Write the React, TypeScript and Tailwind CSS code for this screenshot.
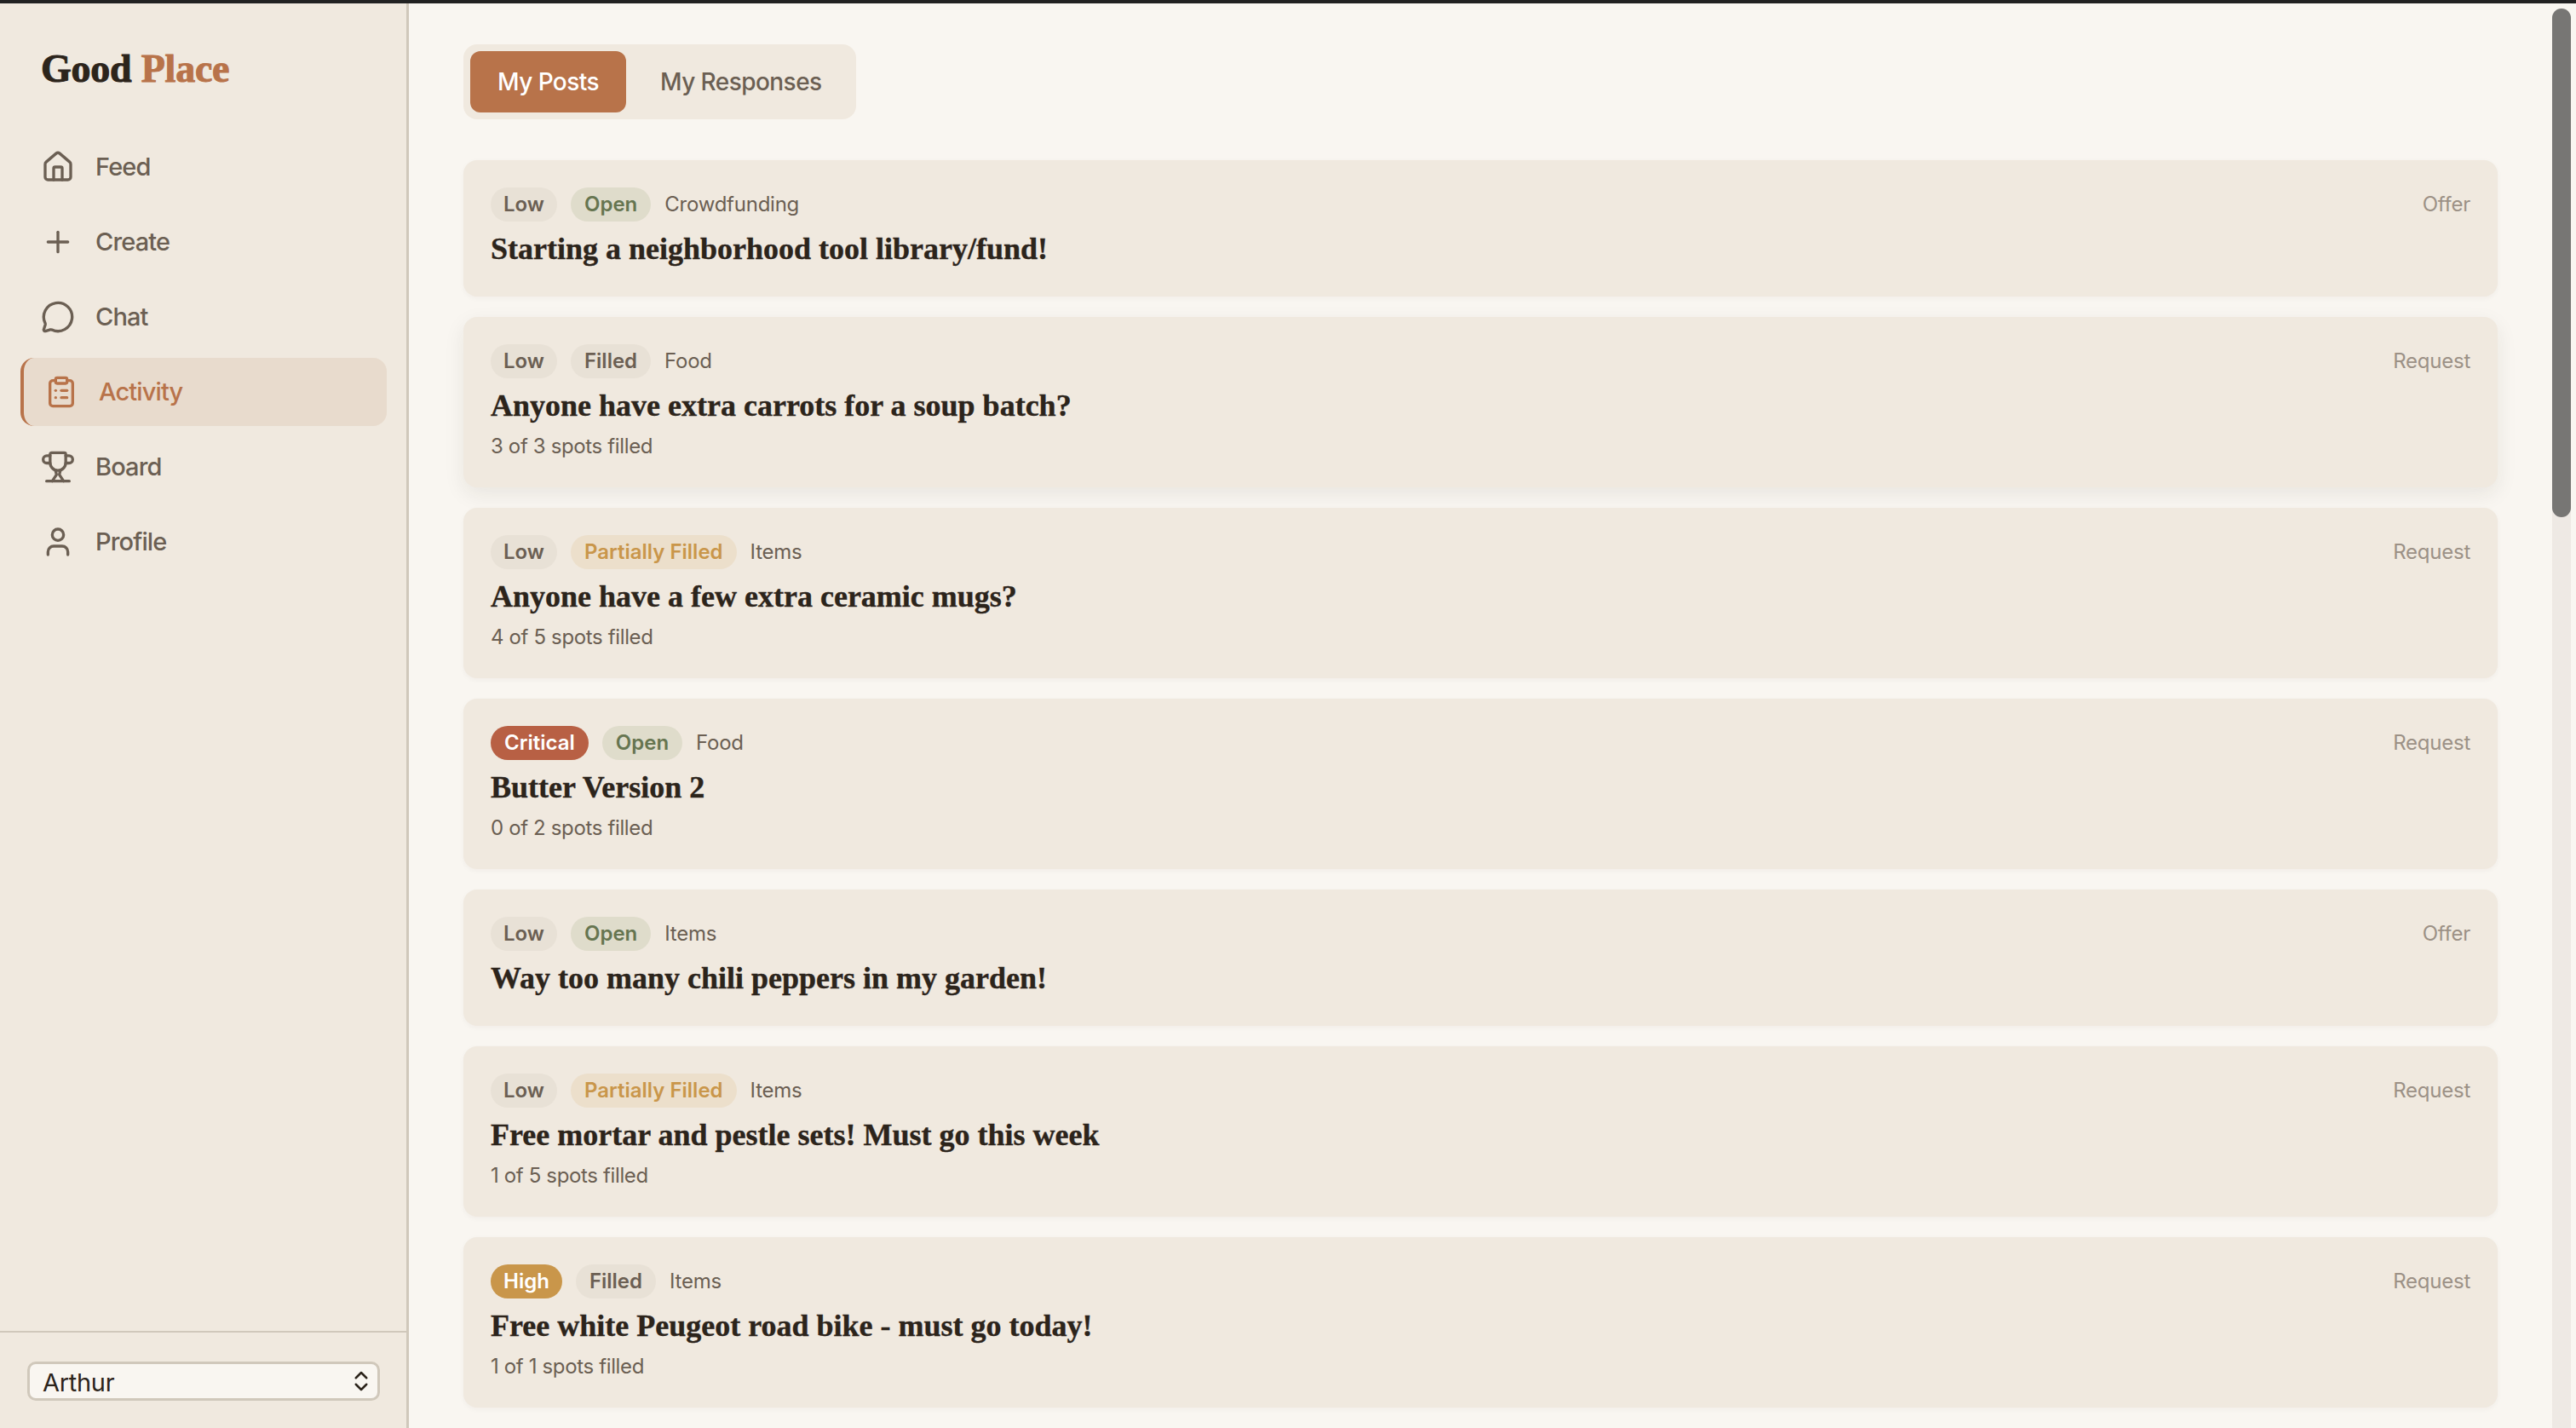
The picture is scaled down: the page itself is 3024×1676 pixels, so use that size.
import { ChevronsUpDown, ClipboardList, House, MessageCircle, Plus, User } from "lucide-react";

const SANS = "font-['Inter','Liberation_Sans',sans-serif]";
const SERIF = "font-['Liberation_Serif','DejaVu_Serif',serif]";

type Post = {
  urgency: "Low" | "High" | "Critical";
  status: "Open" | "Filled" | "Partially Filled";
  category: string;
  title: string;
  spots?: string;
  kind: "Offer" | "Request";
  hovered?: boolean;
};

const posts: Post[] = [
  { urgency: "Low", status: "Open", category: "Crowdfunding", title: "Starting a neighborhood tool library/fund!", kind: "Offer" },
  { urgency: "Low", status: "Filled", category: "Food", title: "Anyone have extra carrots for a soup batch?", spots: "3 of 3 spots filled", kind: "Request", hovered: true },
  { urgency: "Low", status: "Partially Filled", category: "Items", title: "Anyone have a few extra ceramic mugs?", spots: "4 of 5 spots filled", kind: "Request" },
  { urgency: "Critical", status: "Open", category: "Food", title: "Butter Version 2", spots: "0 of 2 spots filled", kind: "Request" },
  { urgency: "Low", status: "Open", category: "Items", title: "Way too many chili peppers in my garden!", kind: "Offer" },
  { urgency: "Low", status: "Partially Filled", category: "Items", title: "Free mortar and pestle sets! Must go this week", spots: "1 of 5 spots filled", kind: "Request" },
  { urgency: "High", status: "Filled", category: "Items", title: "Free white Peugeot road bike - must go today!", spots: "1 of 1 spots filled", kind: "Request" },
];

const urgencyClass = {
  Low: "bg-[#e8e1d6] px-[15px] text-[#6b5f53]",
  High: "bg-[#c9964a] px-[15px] text-white",
  Critical: "bg-[#b86044] px-4 text-white",
};

const statusClass = {
  Open: "bg-[#dfdccb] text-[#667550]",
  Filled: "bg-[#e8e1d6] text-[#6b5f53]",
  "Partially Filled": "bg-[#ecdfcb] text-[#c9964a]",
};

function TrophyIcon({ className, strokeWidth }: { className?: string; strokeWidth?: number }) {
  return (
    <svg viewBox="0 0 24 24" fill="none" stroke="currentColor" strokeWidth={strokeWidth} strokeLinecap="round" strokeLinejoin="round" className={className}>
      <path d="M6.5 9a5.5 5.5 0 0 0 11 0V3a1 1 0 0 0-1-1h-9a1 1 0 0 0-1 1z" />
      <path d="M6.5 9.3H4.2a2.6 2.6 0 0 1 0-5.2h2.3" />
      <path d="M17.5 9.3h2.3a2.6 2.6 0 0 0 0-5.2h-2.3" />
      <path d="M10.3 14.3 11 17.5 8 22" />
      <path d="M13.7 14.3 13 17.5l3 4.5" />
      <path d="M4 22h16" />
    </svg>
  );
}

function NavItem({ icon: Icon, label, active }: { icon: React.ComponentType<{ className?: string; strokeWidth?: number }>; label: string; active?: boolean }) {
  return (
    <a
      href="#"
      className={`flex h-20 items-center gap-6 rounded-2xl px-6 text-[29px] font-medium tracking-[-0.03em] ${
        active ? "border-l-4 border-[#b8734a] bg-[#e8dbcd] text-[#b8734a]" : "text-[#6b5f53]"
      }`}
    >
      <Icon className="size-10" strokeWidth={2} />
      {label}
    </a>
  );
}

function Card({ post }: { post: Post }) {
  return (
    <div className={`flex justify-between rounded-2xl bg-[#f0e9df] p-8 ${post.hovered ? "shadow-[0_8px_24px_rgba(44,36,27,0.08)]" : "shadow-[0_2px_6px_rgba(44,36,27,0.04)]"}`}>
      <div>
        <div className="flex h-10 items-center gap-4 text-2xl tracking-[-0.01em]">
          <span className={`flex h-10 items-center rounded-full font-semibold tracking-normal ${urgencyClass[post.urgency]}`}>{post.urgency}</span>
          <span className={`flex h-10 items-center rounded-full px-4 font-semibold tracking-normal ${statusClass[post.status]}`}>{post.status}</span>
          <span className="text-[#6b5f53]">{post.category}</span>
        </div>
        <h3 className={`mt-[9px] text-4xl leading-[47px] font-bold text-[#2c241b] [-webkit-text-stroke:0.4px_currentColor] ${SERIF}`}>{post.title}</h3>
        {post.spots && <p className="mt-2 text-2xl leading-8 tracking-[-0.015em] text-[#6b5f53]">{post.spots}</p>}
      </div>
      <span className="text-2xl leading-10 tracking-[-0.01em] text-[#9c9186]">{post.kind}</span>
    </div>
  );
}

export default function App() {
  return (
    <div className={`flex h-[1676px] flex-col overflow-hidden bg-[#f9f6f1] ${SANS}`}>
      <div className="h-1 shrink-0 bg-[#222222]" />
      <div className="flex min-h-0 flex-1">
        <aside className="flex w-[480px] shrink-0 flex-col border-r-[3px] border-[#d0c8bb] bg-[#f0e9df]">
          <h1 className={`px-12 pt-[49px] text-[46px] leading-14 font-bold tracking-[-0.005em] text-[#2c241b] [-webkit-text-stroke:1px_currentColor] ${SERIF}`}>
            Good <span className="text-[#b8734a]">Place</span>
          </h1>
          <nav className="mt-[47px] flex flex-1 flex-col gap-2 pr-[23px] pl-6">
            <NavItem icon={House} label="Feed" />
            <NavItem icon={Plus} label="Create" />
            <NavItem icon={MessageCircle} label="Chat" />
            <NavItem icon={ClipboardList} label="Activity" active />
            <NavItem icon={TrophyIcon} label="Board" />
            <NavItem icon={User} label="Profile" />
          </nav>
          <div className="border-t-2 border-[#d0c8bb] pt-[34px] pr-[31px] pb-8 pl-8">
            <div className="relative">
              <select className="h-[46px] w-full appearance-none rounded-[10px] border-[3px] border-[#d0c8bb] bg-[#f9f6f1] px-[15px] pb-1.5 text-[29px] tracking-[-0.01em] text-[#2c241b]">
                <option>Arthur</option>
              </select>
              <ChevronsUpDown className="absolute top-2 right-[7px] size-[30px] text-[#2c241b]" strokeWidth={2} />
            </div>
          </div>
        </aside>

        <main className="min-w-0 flex-1 py-12 pl-16">
          <div className="inline-flex gap-2 rounded-2xl bg-[#f0e9df] p-2">
            <button className="h-[72px] rounded-xl bg-[#b8734a] px-8 text-[28px] font-medium tracking-[-0.02em] text-white">My Posts</button>
            <button className="h-[72px] rounded-xl px-8 text-[28px] font-medium tracking-[-0.02em] text-[#6b5f53]">My Responses</button>
          </div>
          <div className="mt-12 flex flex-col gap-6">
            {posts.map((post) => (
              <Card key={post.title} post={post} />
            ))}
          </div>
        </main>

        <div className="w-[92px] shrink-0 pt-1.5 pr-1.5 pl-[64px]">
          <div className="h-full w-[22px] rounded-t-xl bg-[#eee9e4]">
            <div className="h-[597px] rounded-xl bg-[#777674]" />
          </div>
        </div>
      </div>
    </div>
  );
}
